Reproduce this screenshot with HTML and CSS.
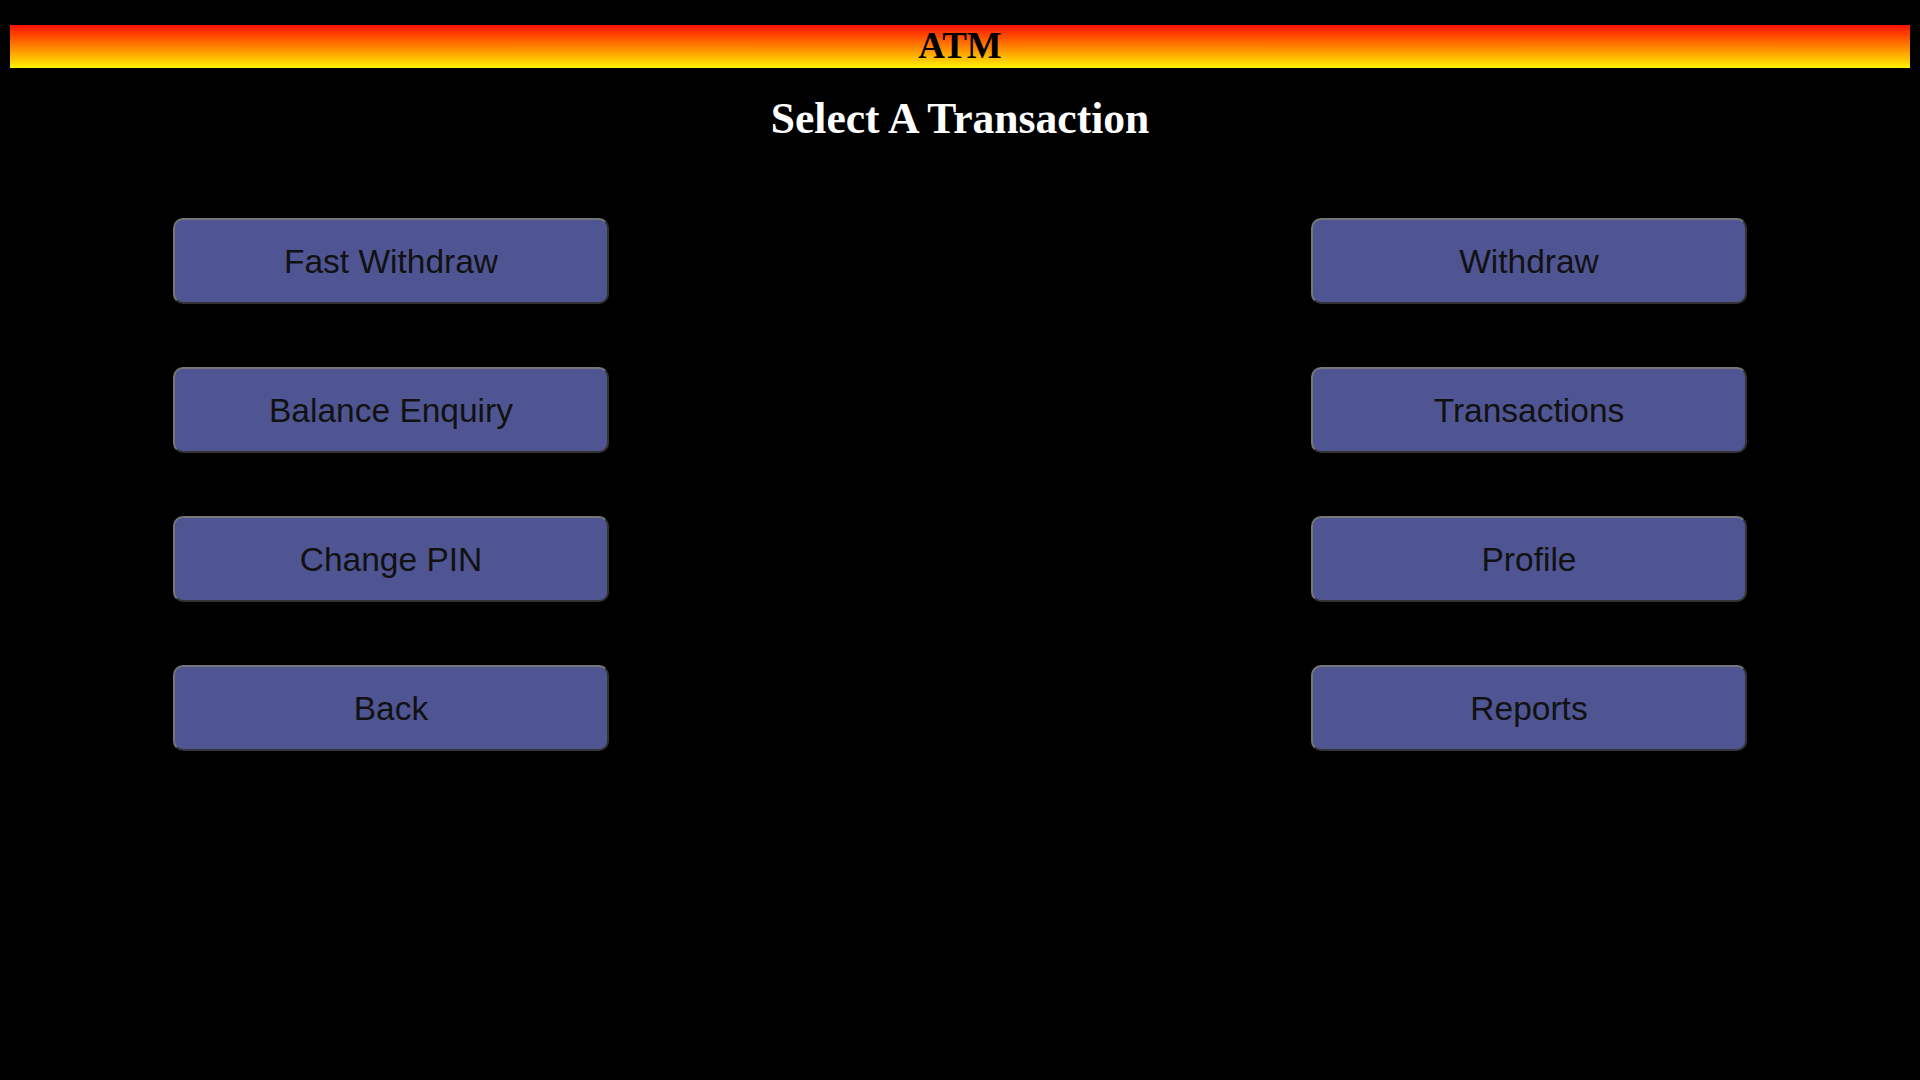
FILE: index.html
```html
<!DOCTYPE html>
<html>
<head>
<meta charset="utf-8">
<title>ATM</title>
<link rel="stylesheet" href="styles.css">
</head>
<body>
<header class="bar">ATM</header>
<h1 class="title">Select A Transaction</h1>
<main class="menu">
  <div class="col">
    <button class="btn">Fast Withdraw</button>
    <button class="btn">Balance Enquiry</button>
    <button class="btn">Change PIN</button>
    <button class="btn">Back</button>
  </div>
  <div class="col">
    <button class="btn">Withdraw</button>
    <button class="btn">Transactions</button>
    <button class="btn">Profile</button>
    <button class="btn">Reports</button>
  </div>
</main>
</body>
</html>
```
FILE: styles.css
```css
html, body {
  background: #000;
}
body {
  margin: 0;
  padding: 25px 10px 0;
  font-family: "Liberation Serif", "Times New Roman", serif;
}
.bar {
  height: 43px;
  line-height: 41px;
  text-align: center;
  font-weight: bold;
  font-size: 37px;
  color: #000;
  background: linear-gradient(to bottom, #ff1000, #fff200);
}
.title {
  margin: 26px 0 0;
  text-align: center;
  color: #fff;
  font-size: 43.6px;
  font-weight: bold;
  line-height: 48px;
}
.menu {
  display: flex;
  justify-content: space-between;
  padding: 76px 163px 0;
}
.col {
  display: flex;
  flex-direction: column;
  gap: 63px;
}
.btn {
  width: 436px;
  height: 86px;
  box-sizing: border-box;
  border: 2px solid;
  border-color: #777 #333 #333 #777;
  border-radius: 10px;
  background: #4f5592;
  color: #111;
  font-family: "Liberation Sans", Arial, sans-serif;
  font-size: 33.5px;
  padding: 1px 0 0;
}
```
